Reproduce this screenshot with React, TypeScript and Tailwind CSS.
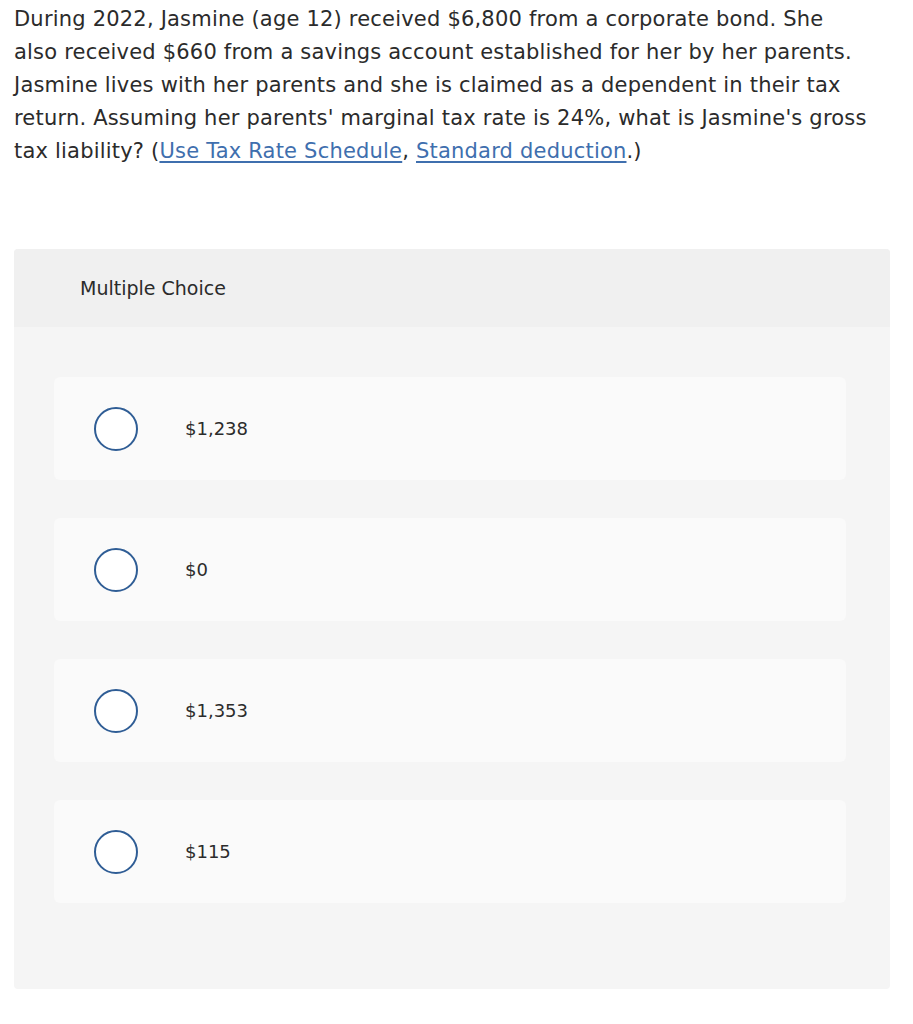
import React from "react";

const options = ["$1,238", "$0", "$1,353", "$115"];

export default function App() {
  return (
    <div className="w-[913px] h-[1024px] bg-white text-[#2b2b2b]" style={{ fontFamily: "'DejaVu Sans', sans-serif" }}>
      <div className="pl-[14px] pr-[10px] pt-[3px] text-[21px] leading-[33px] tracking-[0.2px] whitespace-nowrap">
        During 2022, Jasmine (age 12) received $6,800 from a corporate bond. She
        <br />
        also received $660 from a savings account established for her by her parents.
        <br />
        Jasmine lives with her parents and she is claimed as a dependent in their tax
        <br />
        return. Assuming her parents' marginal tax rate is 24%, what is Jasmine's gross
        <br />
        tax liability? (<a className="text-[#3f6fae] underline underline-offset-[3px]">Use Tax Rate Schedule</a>,{" "}
        <a className="text-[#3f6fae] underline underline-offset-[3px]">Standard deduction</a>.)
      </div>
      <div className="ml-[14px] mt-[81px] w-[876px] h-[740px] rounded-[4px] bg-[#f5f5f5] overflow-hidden">
        <div className="h-[78px] bg-[#f0f0f0] flex items-center pl-[66px] text-[19px]">Multiple Choice</div>
        <div className="flex flex-col gap-[38px] pt-[50px] pl-[40px] pr-[44px]">
          {options.map((o) => (
            <div key={o} className="h-[103px] rounded-[6px] bg-[#fafafa] flex items-center">
              <div className="ml-[40px] w-[44px] h-[44px] rounded-full border-2 border-[#2f5d95] bg-white" />
              <div className="ml-[47px] text-[18px]">{o}</div>
            </div>
          ))}
        </div>
      </div>
    </div>
  );
}
